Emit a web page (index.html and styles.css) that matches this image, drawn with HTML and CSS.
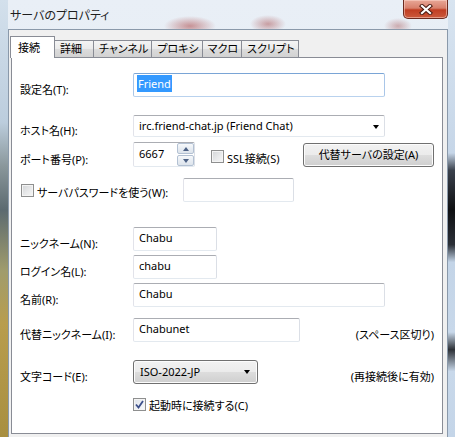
FILE: index.html
```html
<!DOCTYPE html>
<html lang="ja">
<head>
<meta charset="utf-8">
<title>サーバのプロパティ</title>
<link rel="stylesheet" href="styles.css">
</head>
<body>
<div class="window">
  <div class="titlebar">
    <span class="title">サーバのプロパティ</span>
    <div class="close">
      <svg width="14" height="11" viewBox="0 0 14 11">
        <path d="M3 2 L11 9 M11 2 L3 9" stroke="#4a1b12" stroke-width="4.2" stroke-linecap="square"/>
        <path d="M3 2 L11 9 M11 2 L3 9" stroke="#ffffff" stroke-width="2.2" stroke-linecap="square"/>
      </svg>
    </div>
  </div>
  <div class="client">
    <div class="tabs">
      <div class="tab active">接続</div>
      <div class="tab">詳細</div>
      <div class="tab">チャンネル</div>
      <div class="tab">プロキシ</div>
      <div class="tab">マクロ</div>
      <div class="tab">スクリプト</div>
    </div>
    <div class="panel">
      <div class="row r-name">
        <span class="label">設定名(T):</span>
        <div class="field long focus"><span class="selected">Friend</span></div>
      </div>
      <div class="row r-host">
        <span class="label">ホスト名(H):</span>
        <div class="field long combo">
          <span>irc.friend-chat.jp (Friend Chat)</span>
          <span class="arrow"></span>
        </div>
      </div>
      <div class="row r-port">
        <span class="label">ポート番号(P):</span>
        <div class="field port">
          <span>6667</span>
          <div class="spin">
            <div class="spin-btn"><span class="tri up"></span></div>
            <div class="spin-btn"><span class="tri down"></span></div>
          </div>
        </div>
        <label class="check ssl"><span class="box"></span><span>SSL接続(S)</span></label>
        <div class="button alt-server">代替サーバの設定(A)</div>
      </div>
      <div class="row r-pass">
        <label class="check pass-check"><span class="box"></span><span>サーバパスワードを使う(W):</span></label>
        <div class="field pass"></div>
      </div>
      <div class="row r-nick">
        <span class="label">ニックネーム(N):</span>
        <div class="field short">Chabu</div>
      </div>
      <div class="row r-login">
        <span class="label">ログイン名(L):</span>
        <div class="field short">chabu</div>
      </div>
      <div class="row r-real">
        <span class="label">名前(R):</span>
        <div class="field long">Chabu</div>
      </div>
      <div class="row r-alt">
        <span class="label">代替ニックネーム(I):</span>
        <div class="field alt">Chabunet</div>
        <span class="hint">(スペース区切り)</span>
      </div>
      <div class="row r-enc">
        <span class="label">文字コード(E):</span>
        <div class="button dropdown"><span>ISO-2022-JP</span><span class="arrow"></span></div>
        <span class="hint">(再接続後に有効)</span>
      </div>
      <div class="row r-auto">
        <label class="check"><span class="box checked">
          <svg width="9" height="9" viewBox="0 0 9 9"><path d="M1 4.5 L3.5 7.5 L8 1" fill="none" stroke="#3c4f8a" stroke-width="1.8"/></svg>
        </span><span>起動時に接続する(C)</span></label>
      </div>
    </div>
  </div>
</div>
</body>
</html>
```
FILE: styles.css
```css
html, body {
  margin: 0;
  padding: 0;
}
body {
  width: 455px;
  height: 437px;
  overflow: hidden;
  font-family: "Noto Sans", "Noto Sans CJK JP", sans-serif;
  font-size: 11px;
  font-feature-settings: "palt";
  white-space: nowrap;
  color: #000;
}
.window {
  width: 455px;
  height: 437px;
  display: flex;
  flex-direction: column;
  background:
    linear-gradient(to bottom, #d3e0ec 0, #bccddd 28%, #8a979b 38%, #5c6a70 48%, #a09c6c 62%, #b89d4e 74%, #a88f40 100%) 0 0 / 8px 100% no-repeat,
    linear-gradient(to bottom, #d8e4f0 0, #c6d6e8 35%, #3a414c 39%, #0e0f12 48%, #2b3038 56%, #c3d4e7 60%, #c8d8ea 76%, #2c3036 80%, #c8d8ea 85%, #c4d5e8 100%) 100% 0 / 7px 100% no-repeat,
    radial-gradient(ellipse 26px 10px at 190px 26px, rgba(170, 70, 70, 0.55), rgba(170, 70, 70, 0) 100%),
    radial-gradient(ellipse 18px 9px at 268px 24px, rgba(160, 60, 60, 0.45), rgba(160, 60, 60, 0) 100%),
    radial-gradient(ellipse 14px 8px at 398px 26px, rgba(160, 70, 70, 0.4), rgba(160, 70, 70, 0) 100%),
    linear-gradient(to bottom, #e9eff6 0, #dfe8f2 100%);
}
.titlebar {
  height: 29px;
  flex: none;
  display: flex;
  align-items: flex-start;
}
.title {
  margin: 6px 0 0 10px;
  font-family: "Noto Sans CJK JP", sans-serif;
  font-size: 12px;
  color: #1e1e1e;
}
.close {
  margin-left: auto;
  margin-right: 7px;
  width: 45px;
  height: 19px;
  box-sizing: border-box;
  border: 1px solid #6b2a1f;
  border-top: none;
  border-radius: 0 0 5px 5px;
  background: linear-gradient(to bottom, #e8a797 0, #d8806c 45%, #c03d22 55%, #cc5a3c 100%);
  box-shadow: inset 0 0 0 1px rgba(255, 220, 210, 0.5);
  display: flex;
  align-items: center;
  justify-content: center;
}
.close svg {
  display: block;
}
.client {
  margin-left: 8px;
  width: 440px;
  flex: 1;
  box-sizing: border-box;
  border: 1px solid #8a99aa;
  border-bottom: none;
  background: #f0f0f0;
  padding: 6px 0 0 2px;
}
.tabs {
  display: flex;
  align-items: flex-end;
  height: 21px;
  margin-left: -1px;
}
.tab {
  height: 17px;
  min-width: 39px;
  box-sizing: border-box;
  border: 1px solid #898c95;
  border-bottom: none;
  border-left: none;
  background: linear-gradient(to bottom, #f4f4f4 0, #eaeaea 50%, #dcdcdc 51%, #d2d2d2 100%);
  padding: 0 3px 0 5px;
  line-height: 15px;
  font-size: 11px;
}
.tab.active {
  height: 22px;
  border-left: 1px solid #898c95;
  background: #fff;
  margin-bottom: -1px;
  position: relative;
  z-index: 1;
  padding: 3px 14px 0 7px;
  line-height: 15px;
}
.panel {
  width: 432px;
  height: 377px;
  box-sizing: border-box;
  border: 1px solid #898c95;
  background: #fff;
  padding: 15px 8px 0 8px;
}
.row {
  display: flex;
  align-items: center;
  height: 24px;
}
.r-host { margin-top: 18px; height: 22px; }
.r-port { margin-top: 5px; height: 26px; }
.r-pass { margin-top: 10px; }
.r-nick { margin-top: 25px; }
.r-login { margin-top: 4px; }
.r-real { margin-top: 4px; }
.r-alt { margin-top: 11px; }
.r-enc { margin-top: 18px; }
.r-auto { margin-top: 12px; height: 16px; padding-left: 113px; }
.label {
  width: 113px;
  flex: none;
  padding-top: 7px;
}
.field {
  height: 24px;
  box-sizing: border-box;
  border: 1px solid #abadb3;
  border-color: #abadb3 #dbdfe6 #e3e9ef #e2e3ea;
  border-radius: 2px;
  background: #fff;
  padding: 0 5px 3px 5px;
  display: flex;
  align-items: center;
  flex: none;
}
.field.focus {
  border-color: #7aa5d6 #a9c6e8 #b9d2ee #a9c6e8;
  padding-left: 3px;
}
.selected {
  background: #3399ff;
  color: #fff;
  padding: 1px 1px 1px 1px;
}
.long { width: 252px; }
.short { width: 84px; }
.alt { width: 167px; }
.pass { width: 111px; }
.combo {
  height: 22px;
  padding-bottom: 2px;
}
.arrow {
  margin-left: auto;
  width: 0;
  height: 0;
  border-left: 3.5px solid transparent;
  border-right: 3.5px solid transparent;
  border-top: 4px solid #000;
  margin-top: 3px;
}
.port {
  width: 62px;
  height: 25px;
  padding: 0 0 3px 5px;
  align-self: flex-start;
}
.spin {
  margin-left: auto;
  align-self: stretch;
  margin-bottom: -3px;
  display: flex;
  flex-direction: column;
  gap: 1px;
  width: 17px;
}
.spin-btn {
  flex: 1;
  box-sizing: border-box;
  border: 1px solid #b3c1d3;
  border-radius: 2px;
  background: linear-gradient(to bottom, #f7f9fb 0, #e8edf3 50%, #dde4ec 100%);
  display: flex;
  align-items: center;
  justify-content: center;
}
.tri {
  width: 0;
  height: 0;
  border-left: 3.5px solid transparent;
  border-right: 3.5px solid transparent;
}
.tri.up { border-bottom: 4px solid #4d6185; }
.tri.down { border-top: 4px solid #4d6185; }
.check {
  display: flex;
  align-items: center;
  gap: 3px;
}
.box {
  width: 13px;
  height: 13px;
  box-sizing: border-box;
  border: 1px solid #8e8f8f;
  background: linear-gradient(135deg, #d2d4d7 0, #e8e9ea 55%, #f6f6f6 100%);
  box-shadow: inset 0 0 0 1px #f4f4f4;
  display: flex;
  align-items: center;
  justify-content: center;
  flex: none;
}
.box.checked {
  background: linear-gradient(135deg, #dfe3ea 0, #eef1f5 60%, #f9fafb 100%);
}
.box svg { display: block; }
.ssl {
  margin-left: 16px;
  padding-top: 2px;
}
.ssl .box { margin-top: 1px; }
.pass-check {
  width: 162px;
  flex: none;
  padding-left: 1px;
}
.pass-check span:last-child,
.ssl span:last-child {
  padding-top: 3px;
}
.r-auto .check span:last-child {
  padding-top: 2px;
}
.button {
  height: 24px;
  box-sizing: border-box;
  border: 1px solid #707070;
  border-radius: 3px;
  background: linear-gradient(to bottom, #f2f2f2 0, #ebebeb 50%, #dddddd 51%, #cfcfcf 100%);
  box-shadow: inset 0 0 0 1px #fcfcfc;
  display: flex;
  align-items: center;
  flex: none;
}
.alt-server {
  margin-left: auto;
  width: 131px;
  justify-content: center;
  padding-bottom: 2px;
}
.dropdown {
  width: 125px;
  padding: 0 7px 2px 6px;
}
.dropdown .arrow { margin-top: 2px; }
.hint {
  margin-left: auto;
  padding-top: 7px;
}
```
